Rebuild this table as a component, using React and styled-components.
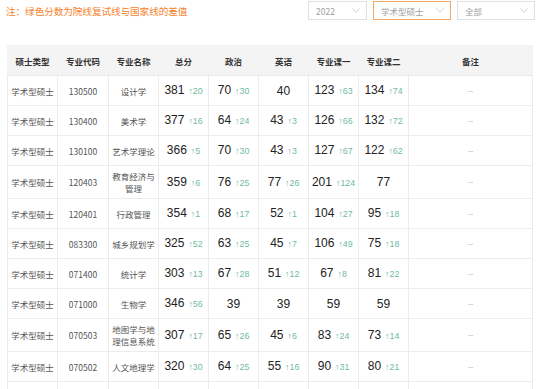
import React from 'react';
import styled, { createGlobalStyle } from 'styled-components';

const GlobalStyle = createGlobalStyle`
  html, body {
    margin: 0;
    padding: 0;
    background: #fff;
  }
  body {
    font-family: "Liberation Sans", "Noto Sans CJK SC", sans-serif;
    overflow: hidden;
  }
`;

// 各行のデータ（総分・政治・英語・専門一・専門二）
const rows = [
  ['学术型硕士', '130500', '设计学', [381, 20], [70, 30], [40], [123, 63], [134, 74]],
  ['学术型硕士', '130400', '美术学', [377, 16], [64, 24], [43, 3], [126, 66], [132, 72]],
  ['学术型硕士', '130100', '艺术学理论', [366, 5], [70, 30], [43, 3], [127, 67], [122, 62]],
  ['学术型硕士', '120403', '教育经济与管理', [359, 6], [76, 25], [77, 26], [201, 124], [77]],
  ['学术型硕士', '120401', '行政管理', [354, 1], [68, 17], [52, 1], [104, 27], [95, 18]],
  ['学术型硕士', '083300', '城乡规划学', [325, 52], [63, 25], [45, 7], [106, 49], [75, 18]],
  ['学术型硕士', '071400', '统计学', [303, 13], [67, 28], [51, 12], [67, 8], [81, 22]],
  ['学术型硕士', '071000', '生物学', [346, 56], [39], [39], [59], [59]],
  ['学术型硕士', '070503', '地图学与地理信息系统', [307, 17], [65, 26], [45, 6], [83, 24], [73, 14]],
  ['学术型硕士', '070502', '人文地理学', [320, 30], [64, 25], [55, 16], [90, 31], [80, 21]],
];

const heads = ['硕士类型', '专业代码', '专业名称', '总分', '政治', '英语', '专业课一', '专业课二', '备注'];
const widths = [50, 51, 50, 50, 50, 50, 50, 50, 124];

const Chevron = () => (
  <svg width="8" height="5" viewBox="0 0 8 5">
    <path d="M0.5 0.5 L4 4.2 L7.5 0.5" fill="none" stroke="#c8c8c8" strokeWidth="0.8" />
  </svg>
);

const Score = ({ value }) => (
  <ScoreWrap>
    <Big>{value[0]}</Big>
    {value[1] !== undefined && <Diff>↑{value[1]}</Diff>}
  </ScoreWrap>
);

const App = () => {
  return (
    <Page>
      <GlobalStyle />
      <TopBar>
        <Note>注：绿色分数为院线复试线与国家线的差值</Note>
        <Filters>
          <Select w={59}>
            <span>2022</span>
            <Chevron />
          </Select>
          <Select w={78} active>
            <span>学术型硕士</span>
            <Chevron />
          </Select>
          <Select w={78}>
            <span>全部</span>
            <Chevron />
          </Select>
        </Filters>
      </TopBar>

      <Table>
        <colgroup>
          {widths.map((w, i) => (
            <col key={i} style={{ width: w }} />
          ))}
        </colgroup>
        <thead>
          <tr>
            {heads.map((h) => (
              <Th key={h}>{h}</Th>
            ))}
          </tr>
        </thead>
        <tbody>
          {rows.map((r) => (
            <tr key={r[1]}>
              <Td>{r[0]}</Td>
              <Td>{r[1]}</Td>
              <Td>{r[2]}</Td>
              {r.slice(3).map((s, i) => (
                <Td key={i}>
                  <Score value={s} />
                </Td>
              ))}
              <Td muted>--</Td>
            </tr>
          ))}
          {/* 画面下端で切れている次の行（枠線のみ見える） */}
          <tr>
            {widths.map((w, i) => (
              <Td key={i} />
            ))}
          </tr>
        </tbody>
      </Table>
    </Page>
  );
};

export default App;

const Page = styled.div`
  padding: 1px 3px 0 6px;
`;

const TopBar = styled.div`
  display: flex;
  justify-content: space-between;
  align-items: center;
  height: 19px;
`;

const Note = styled.div`
  color: #f5822a;
  font-size: 9.6px;
  font-family: "Noto Sans CJK SC", sans-serif;
  letter-spacing: -0.05px;
`;

const Filters = styled.div`
  display: flex;
  gap: 6px;
`;

const Select = styled.div`
  box-sizing: border-box;
  width: ${(p) => p.w}px;
  height: 19px;
  border: 1px solid ${(p) => (p.active ? '#f3a965' : '#e0e0e0')};
  padding: 0 6px 0 7px;
  display: flex;
  align-items: center;
  justify-content: space-between;
  font-size: 8.5px;
  color: #a0a0a0;
  font-family: "Noto Sans CJK SC", sans-serif;
`;

const Table = styled.table`
  margin: 25px 0 0 1px;
  width: 525px;
  table-layout: fixed;
  border-collapse: collapse;
  font-family: "Noto Sans CJK SC", sans-serif;
`;

const Th = styled.th`
  height: 29px;
  padding: 0 2px;
  background: #f4f4f4;
  border: 1px solid #f4f4f4;
  border-bottom-color: #e9e9e9;
  color: #333;
  font-size: 8.5px;
  font-weight: bold;
  text-align: center;
`;

const Td = styled.td`
  height: 21px;
  padding: 4px 2px;
  border: 1px solid #ececec;
  color: ${(p) => (p.muted ? '#b0b0b0' : '#555')};
  font-size: ${(p) => (p.muted ? '8px' : '8.5px')};
  line-height: 12px;
  text-align: center;
  vertical-align: middle;
`;

const ScoreWrap = styled.span`
  display: inline-flex;
  align-items: baseline;
  gap: 4px;
  white-space: nowrap;
  line-height: 12px;
  font-family: "Liberation Sans", "Noto Sans CJK SC", sans-serif;
`;

const Big = styled.span`
  font-size: 12px;
  color: #222;
`;

const Diff = styled.span`
  font-size: 8.8px;
  color: #6fbba0;
`;
